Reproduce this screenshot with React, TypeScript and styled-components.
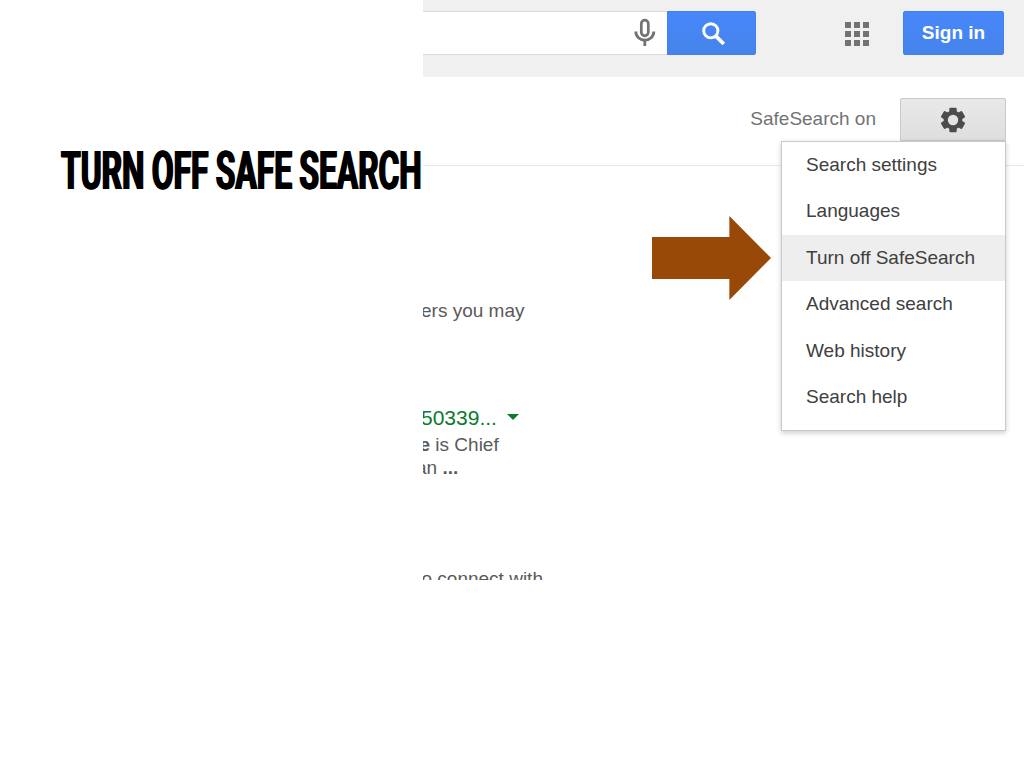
import React from "react";

import styled, { createGlobalStyle } from "styled-components";

const MENU_ITEMS = [
  "Search settings",
  "Languages",
  "Turn off SafeSearch",
  "Advanced search",
  "Web history",
  "Search help",
];

const HIGHLIGHTED = "Turn off SafeSearch";

function MicIcon() {
  return (
    <svg width="22" height="30" viewBox="0 0 22 30" fill="none" stroke="#737373">
      <rect x="7.3" y="2.2" width="7" height="15.6" rx="3.5" strokeWidth="2.7" />
      <path d="M1.8 13.4c0 5.2 4 8.7 9 8.7s9-3.5 9-8.7" strokeWidth="2.8" />
      <path d="M10.8 22v6" strokeWidth="2.8" />
    </svg>
  );
}

function SearchIcon() {
  return (
    <svg width="24" height="24" viewBox="0 0 24 24" fill="none" stroke="#fff">
      <circle cx="8.8" cy="8.8" r="7.1" strokeWidth="2.9" />
      <path d="M13.4 13.6l8.4 8.4" strokeWidth="3.8" />
    </svg>
  );
}

function GearIcon() {
  return (
    <svg width="26" height="26" viewBox="0 0 26 26">
      <g fill="#4c4c4c">
        {[0, 60, 120].map((angle) => (
          <rect
            key={angle}
            x="9.3"
            y="0.8"
            width="7.4"
            height="24.4"
            rx="1.2"
            transform={`rotate(${angle} 13 13)`}
          />
        ))}
        <circle cx="13" cy="13" r="9.4" />
      </g>
      <circle cx="13" cy="13" r="5.2" fill="#e3e3e3" />
    </svg>
  );
}

function App() {
  return (
    <>
      <GlobalStyle />
      <Slide>
        <TitleColumn>
          <Title>TURN OFF SAFE SEARCH</Title>
        </TitleColumn>
        <Capture>
          <Header>
            <SearchField>
              <MicIcon />
            </SearchField>
            <SearchButton>
              <SearchIcon />
            </SearchButton>
            <AppsGrid>
              {Array.from({ length: 9 }, (_, index) => (
                <AppsDot key={index} />
              ))}
            </AppsGrid>
            <SignIn>Sign in</SignIn>
          </Header>
          <Toolbar>
            <Status>SafeSearch on</Status>
            <SettingsButton>
              <GearIcon />
            </SettingsButton>
            <Menu>
              {MENU_ITEMS.map((item) => (
                <MenuItem key={item} $active={item === HIGHLIGHTED}>
                  {item}
                </MenuItem>
              ))}
            </Menu>
          </Toolbar>
          <Results>
            <Snippet $shift={-2}>ers you may</Snippet>
            <ResultUrl>
              50339...
              <Caret />
            </ResultUrl>
            <Snippet $shift={-3.5}>
              <b>e</b> is Chief
            </Snippet>
            <Snippet $shift={-7}>
              an <b>...</b>
            </Snippet>
            <LastSnippet $shift={-1.5}>o connect with</LastSnippet>
          </Results>
          <Arrow />
        </Capture>
      </Slide>
    </>
  );
}

const GlobalStyle = createGlobalStyle`
  body {
    margin: 0;
    background: #fff;
    font-family: "Liberation Sans", Arial, sans-serif;
  }
`;

const Slide = styled.main`
  display: grid;
  grid-template-columns: 423px 601px;
  width: 1024px;
  height: 768px;
  overflow: hidden;
  background: #fff;
`;

const TitleColumn = styled.div`
  padding: 139px 0 0 61px;
`;

/* Sideways shadows thicken the stems only, which keeps the condensed face heavy */
const Title = styled.h1`
  margin: 0;
  width: max-content;
  font-family: Roboto, "Liberation Sans", sans-serif;
  font-size: 53.5px;
  font-weight: 700;
  line-height: 64px;
  word-spacing: -1px;
  white-space: nowrap;
  color: #000;
  text-shadow: 1.3px 0 #000, -1.3px 0 #000;
  transform: scaleX(0.594);
  transform-origin: left center;
`;

const Capture = styled.section`
  position: relative;
  height: 580px;
  overflow: hidden;
`;

const Header = styled.header`
  display: flex;
  align-items: flex-start;
  box-sizing: border-box;
  height: 77px;
  padding-top: 11px;
  background: #f0f0f0;
`;

const SearchField = styled.div`
  display: flex;
  align-items: center;
  justify-content: flex-end;
  box-sizing: border-box;
  width: 244px;
  height: 44px;
  padding-right: 11px;
  background: #fff;
  border: solid #dadada;
  border-width: 1px 0;
`;

const SearchButton = styled.div`
  display: flex;
  align-items: center;
  justify-content: center;
  box-sizing: border-box;
  width: 89px;
  height: 44px;
  padding-left: 4px;
  padding-top: 2px;
  background: linear-gradient(#4787fb, #4683ea);
  border: 1px solid #4080f2;
  border-radius: 0 2px 2px 0;
`;

const AppsGrid = styled.div`
  display: grid;
  grid-template-columns: repeat(3, 6px);
  gap: 3px;
  margin: 11px 0 0 89px;
`;

const AppsDot = styled.span`
  height: 6px;
  background: #737373;
`;

const SignIn = styled.div`
  box-sizing: border-box;
  width: 101px;
  height: 44px;
  margin-left: 34px;
  background: linear-gradient(#4787fb, #4683ea);
  border: 1px solid #4080f2;
  border-radius: 2px;
  font-size: 19px;
  font-weight: bold;
  line-height: 42px;
  text-align: center;
  color: #fff;
`;

const Toolbar = styled.div`
  position: relative;
  display: flex;
  justify-content: flex-end;
  box-sizing: border-box;
  height: 89px;
  padding: 21px 18px 0 0;
  border-bottom: 1px solid #e8e8e8;
`;

const Status = styled.span`
  margin-right: 24px;
  font-size: 19px;
  line-height: 42px;
  color: #737373;
`;

const SettingsButton = styled.div`
  display: flex;
  align-items: center;
  justify-content: center;
  box-sizing: border-box;
  width: 106px;
  height: 43px;
  background: linear-gradient(#e9e9e9, #dedede);
  border: 1px solid #c9c9c9;
  border-radius: 2px 2px 0 0;
`;

const Menu = styled.ul`
  position: absolute;
  top: 64px;
  right: 18px;
  box-sizing: border-box;
  width: 225px;
  height: 290px;
  margin: 0;
  padding: 0;
  list-style: none;
  background: #fff;
  border: 1px solid #c9c9c9;
  box-shadow: 0 2px 5px rgba(0, 0, 0, 0.2);
`;

const MenuItem = styled.li<{ $active: boolean }>`
  height: 46.4px;
  padding-left: 24px;
  font-size: 19px;
  line-height: 46.4px;
  color: #404040;
  background: ${({ $active }) => ($active ? "#eee" : "transparent")};
`;

const Results = styled.div`
  padding-top: 133px;
`;

const Snippet = styled.div<{ $shift: number }>`
  margin-left: ${({ $shift }) => $shift}px;
  font-size: 19px;
  line-height: 23px;
  white-space: nowrap;
  color: #5a5a5a;
`;

const LastSnippet = styled(Snippet)`
  margin-top: 88px;
`;

const ResultUrl = styled.div`
  display: flex;
  align-items: center;
  margin: 84px 0 3px -2px;
  font-size: 21px;
  line-height: 24px;
  color: #0b7a2c;
`;

const Caret = styled.span`
  margin-left: 10px;
  margin-bottom: 3px;
  border: solid transparent;
  border-width: 6px 6px 0;
  border-top-color: #0b7a2c;
`;

// Callout drawn over the capture, pointing at the highlighted menu entry
const Arrow = styled.div`
  position: absolute;
  left: 229px;
  top: 216px;
  width: 119px;
  height: 84px;
  background: #984807;
  clip-path: polygon(0 25%, 65% 25%, 65% 0, 100% 50%, 65% 100%, 65% 75%, 0 75%);
`;

export default App;
